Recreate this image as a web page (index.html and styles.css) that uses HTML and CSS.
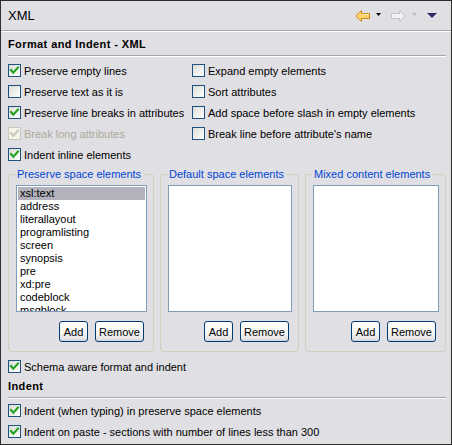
FILE: index.html
```html
<!DOCTYPE html>
<html>
<head>
<meta charset="utf-8">
<link rel="stylesheet" href="styles.css">
</head>
<body>
<div class="panel">
  <div class="titlebar">
    <span class="title">XML</span>
    <div class="nav">
      <svg class="arrow" width="15" height="12" viewBox="0 0 15 12"><path d="M0.8 6 L6.5 0.5 L6.5 3.5 L14.5 3.5 L14.5 8.5 L6.5 8.5 L6.5 11.5 Z" fill="#fcd36a" stroke="#c88a12" stroke-width="1" stroke-linejoin="miter"/><path d="M7.5 4.5 L13.5 4.5" stroke="#fff2c4" stroke-width="1"/></svg>
      <svg class="drop" width="5" height="3" viewBox="0 0 5 3"><polygon points="0,0 5,0 2.5,3" fill="#000"/></svg>
      <svg class="arrow fwd" width="15" height="12" viewBox="0 0 15 12"><path d="M14.2 6 L8.5 0.5 L8.5 3.5 L0.5 3.5 L0.5 8.5 L8.5 8.5 L8.5 11.5 Z" fill="#f2f2f2" stroke="#c4c4c4" stroke-width="1"/></svg>
      <svg class="drop" width="5" height="3" viewBox="0 0 5 3"><polygon points="0,0 5,0 2.5,3" fill="#b8b8b8"/></svg>
      <svg class="menu" width="10" height="5" viewBox="0 0 10 5"><polygon points="0,0 10,0 5,5" fill="#2c2c6c"/></svg>
    </div>
  </div>
  <div class="content">
    <div class="section-title">Format and Indent - XML</div>
    <div class="options">
      <div class="col col-left">
        <label class="check"><span class="cb"><svg viewBox="0 0 11 11"><polyline points="2,5 4.3,7.6 9,2.6" class="tick"/></svg></span>Preserve empty lines</label>
        <label class="check"><span class="cb"></span>Preserve text as it is</label>
        <label class="check"><span class="cb"><svg viewBox="0 0 11 11"><polyline points="2,5 4.3,7.6 9,2.6" class="tick"/></svg></span>Preserve line breaks in attributes</label>
        <label class="check disabled"><span class="cb"><svg viewBox="0 0 11 11"><polyline points="2,5 4.3,7.6 9,2.6" class="tick"/></svg></span>Break long attributes</label>
        <label class="check"><span class="cb"><svg viewBox="0 0 11 11"><polyline points="2,5 4.3,7.6 9,2.6" class="tick"/></svg></span>Indent inline elements</label>
      </div>
      <div class="col">
        <label class="check"><span class="cb"></span>Expand empty elements</label>
        <label class="check"><span class="cb"></span>Sort attributes</label>
        <label class="check"><span class="cb"></span>Add space before slash in empty elements</label>
        <label class="check"><span class="cb"></span>Break line before attribute's name</label>
      </div>
    </div>
    <div class="groups">
      <fieldset class="group">
        <legend>Preserve space elements</legend>
        <div class="list">
          <div class="item selected">xsl:text</div>
          <div class="item">address</div>
          <div class="item">literallayout</div>
          <div class="item">programlisting</div>
          <div class="item">screen</div>
          <div class="item">synopsis</div>
          <div class="item">pre</div>
          <div class="item">xd:pre</div>
          <div class="item">codeblock</div>
          <div class="item">msgblock</div>
        </div>
        <div class="buttons"><button class="btn btn-add">Add</button><button class="btn btn-remove">Remove</button></div>
      </fieldset>
      <fieldset class="group">
        <legend>Default space elements</legend>
        <div class="list"></div>
        <div class="buttons"><button class="btn btn-add">Add</button><button class="btn btn-remove">Remove</button></div>
      </fieldset>
      <fieldset class="group">
        <legend>Mixed content elements</legend>
        <div class="list"></div>
        <div class="buttons"><button class="btn btn-add">Add</button><button class="btn btn-remove">Remove</button></div>
      </fieldset>
    </div>
    <label class="check schema"><span class="cb"><svg viewBox="0 0 11 11"><polyline points="2,5 4.3,7.6 9,2.6" class="tick"/></svg></span>Schema aware format and indent</label>
    <div class="section-title indent-title">Indent</div>
    <div class="indent-options">
      <label class="check"><span class="cb"><svg viewBox="0 0 11 11"><polyline points="2,5 4.3,7.6 9,2.6" class="tick"/></svg></span>Indent (when typing) in preserve space elements</label>
      <label class="check"><span class="cb"><svg viewBox="0 0 11 11"><polyline points="2,5 4.3,7.6 9,2.6" class="tick"/></svg></span>Indent on paste - sections with number of lines less than 300</label>
    </div>
  </div>
</div>
</body>
</html>
```
FILE: styles.css
```css
html, body {
  margin: 0;
  padding: 0;
  background: #e0dfe3;
}
body {
  font-family: "Liberation Sans", Arial, sans-serif;
  font-size: 11px;
  color: #000;
}
.panel {
  width: 452px;
  height: 445px;
  box-sizing: border-box;
  border: 1px solid #2e2e2e;
  background: #e0dfe3;
  overflow: hidden;
}
.titlebar {
  height: 29px;
  display: flex;
  align-items: center;
  padding: 0 14px 0 7px;
  border-bottom: 1px solid #a7a6aa;
  box-shadow: 0 1px 0 #ffffff;
}
.title {
  font-size: 13px;
  line-height: 29px;
}
.nav {
  margin-left: auto;
  display: flex;
  align-items: center;
}
.nav svg { display: block; }
.nav .arrow { margin-top: 1px; }
.nav .drop { margin-left: 6px; margin-top: -2px; }
.nav .fwd { margin-left: 10px; }
.nav .menu { margin-left: 10px; margin-top: 0px; }
.content {
  padding: 1px 5px 0 7px;
}
.section-title {
  font-weight: bold;
  letter-spacing: 0.4px;
  padding-top: 2px;
  line-height: 21px;
  border-bottom: 1px solid #a7a6aa;
  box-shadow: 0 1px 0 #ffffff;
}
.options {
  margin-top: 4px;
  display: flex;
}
.col-left {
  width: 184px;
}
.check {
  display: flex;
  align-items: center;
  height: 21px;
  gap: 3px;
  white-space: nowrap;
}
.cb {
  width: 13px;
  height: 13px;
  box-sizing: border-box;
  border: 1px solid #1c5180;
  background: linear-gradient(135deg, #dcdcd5 0%, #f2f2ef 60%, #ffffff 100%);
  flex: none;
  display: flex;
}
.cb svg {
  width: 11px;
  height: 11px;
}
.tick {
  fill: none;
  stroke: #21a121;
  stroke-width: 2.1;
  stroke-linecap: square;
}
.disabled { color: #aca899; }
.disabled .cb {
  border-color: #cac8bb;
  background: #f5f4ea;
}
.disabled .tick { stroke: #cac8bb; }
.groups {
  margin-top: 3px;
  display: grid;
  grid-template-columns: 146px 139px 1fr;
  gap: 6px;
}
.group {
  margin: 0;
  min-width: 0;
  border: 1px solid #d0d0bf;
  border-radius: 3px;
  padding: 4px 6px 9px 7px;
}
.group legend {
  color: #0046d5;
  line-height: 13px;
  padding: 0 3px 0 2px;
  margin-left: -1px;
}
.list {
  height: 127px;
  box-sizing: border-box;
  border: 1px solid #7f9db9;
  background: #fff;
  padding: 1px 1px 0 1px;
  overflow: hidden;
}
.item {
  height: 13px;
  line-height: 13px;
  padding-left: 2px;
}
.item.selected {
  background: #b2b1bc;
}
.buttons {
  margin-top: 9px;
  display: flex;
  justify-content: flex-end;
  gap: 7px;
  padding-right: 3px;
}
.btn {
  height: 21px;
  box-sizing: border-box;
  border: 1px solid #003c74;
  border-radius: 3px;
  background: linear-gradient(to bottom, #ffffff 0%, #f5f5f2 55%, #e6e6ea 85%, #d2d2dc 100%);
  font-family: "Liberation Sans", Arial, sans-serif;
  font-size: 11px;
  color: #000;
  padding: 0;
}
.btn-add { width: 29px; }
.btn-remove { width: 49px; }
.schema {
  margin-top: 4px;
}
.indent-title {
  padding-top: 0;
  line-height: 19px;
  padding-bottom: 1px;
}
.indent-options {
  margin-top: 2px;
}
```
